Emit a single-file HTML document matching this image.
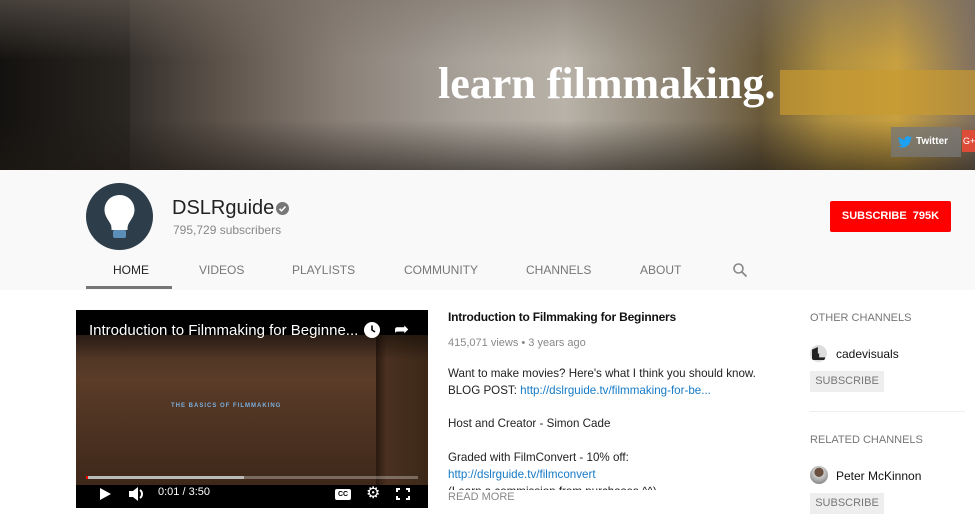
<!DOCTYPE html>
<html><head><meta charset="utf-8"><style>
*{margin:0;padding:0;box-sizing:border-box}
body{width:975px;height:523px;overflow:hidden;background:#fff;font-family:"Liberation Sans",Arial,sans-serif;position:relative}
.ab{position:absolute}
#banner{left:0;top:0;width:975px;height:170px;background:linear-gradient(90deg,#1c1a18 0%,#2e2a26 12%,#5a5048 22%,#8a8078 35%,#a8a29a 48%,#b8b2a8 58%,#8a8070 70%,#6a5a3a 78%,#b09040 85%,#c8a040 92%,#807060 100%)}
#banner .top{left:0;top:0;width:975px;height:60px;background:linear-gradient(180deg,rgba(120,110,100,.5),rgba(0,0,0,0))}
#banner .bot{left:0;top:120px;width:975px;height:50px;background:linear-gradient(180deg,rgba(0,0,0,0),rgba(30,25,20,.6))}
.lf{left:438px;top:58px;font-family:"Liberation Serif",serif;font-weight:bold;font-size:44px;color:#fff}
#head{left:0;top:170px;width:975px;height:120px;background:#f9f9f9}
.nav{top:263px;font-size:12px;color:#777}
</style></head><body>
<div id="banner" class="ab">
<div class="ab" style="left:0;top:0;width:130px;height:170px;background:linear-gradient(90deg,#141210,#2a2622)"></div>
<div class="ab" style="left:780px;top:70px;width:195px;height:45px;background:#c89a30;opacity:.7"></div>
<div class="ab top"></div><div class="ab bot"></div>
<div class="ab lf">learn filmmaking.</div>
<div class="ab" style="left:891px;top:127px;width:70px;height:30px;background:rgba(120,120,120,.75)"></div>
<svg class="ab" style="left:898px;top:136px" width="14" height="12" viewBox="0 0 24 20"><path d="M24 2.4a10 10 0 0 1-2.8.8A5 5 0 0 0 23.3.4a10 10 0 0 1-3.1 1.2A4.9 4.9 0 0 0 11.8 6 14 14 0 0 1 1.7.9a4.9 4.9 0 0 0 1.5 6.6 5 5 0 0 1-2.2-.6 4.9 4.9 0 0 0 3.9 4.9 5 5 0 0 1-2.2.1 4.9 4.9 0 0 0 4.6 3.4A9.9 9.9 0 0 1 0 17.3 14 14 0 0 0 7.5 19.5c9 0 14-7.5 14-14v-.6A10 10 0 0 0 24 2.4z" fill="#1da1f2"/></svg>
<div class="ab" style="left:916px;top:136px;color:#fff;font-size:10px;font-weight:bold">Twitter</div>
<div class="ab" style="left:962px;top:130px;width:13px;height:22px;background:#dd4b39;color:#fff;font-size:9px;padding:6px 1px">G+</div>
</div>
<div id="head" class="ab"></div>
<svg class="ab" style="left:86px;top:183px" width="67" height="67" viewBox="0 0 67 67"><circle cx="33.5" cy="33.5" r="33.5" fill="#2d3e4a"/><path d="M33.5 12c-9 0-15 7-15 15 0 6 4 10 6 14 1 2 1 4 1 6h16c0-2 0-4 1-6 2-4 6-8 6-14 0-8-6-15-15-15z" fill="#fff"/><rect x="27" y="47" width="13" height="8" rx="2" fill="#5b8fb9"/></svg>
<div class="ab" style="left:172px;top:197px;font-size:20px;color:#222">DSLRguide</div>
<svg class="ab" style="left:276px;top:202px" width="13" height="13" viewBox="0 0 13 13"><circle cx="6.5" cy="6.5" r="6.5" fill="#777"/><path d="M3.5 6.8l2 2 4-4.2" stroke="#fff" stroke-width="1.6" fill="none"/></svg>
<div class="ab" style="left:173px;top:223px;font-size:12px;color:#888">795,729 subscribers</div>
<div class="ab" style="left:830px;top:201px;width:121px;height:31px;background:#f00;color:#fff;font-size:11px;font-weight:bold;text-align:center;line-height:31px;border-radius:2px">SUBSCRIBE&nbsp; 795K</div>
<div class="ab nav" style="left:113px;color:#222">HOME</div>
<div class="ab nav" style="left:199px">VIDEOS</div>
<div class="ab nav" style="left:292px">PLAYLISTS</div>
<div class="ab nav" style="left:404px">COMMUNITY</div>
<div class="ab nav" style="left:526px">CHANNELS</div>
<div class="ab nav" style="left:640px">ABOUT</div>
<svg class="ab" style="left:732px;top:262px" width="16" height="16" viewBox="0 0 16 16"><circle cx="6.5" cy="6.5" r="4.5" stroke="#888" stroke-width="1.6" fill="none"/><path d="M10 10l4.5 4.5" stroke="#888" stroke-width="1.8"/></svg>
<div class="ab" style="left:86px;top:286px;width:86px;height:3px;background:#777"></div>
<div class="ab" style="left:76px;top:310px;width:352px;height:198px;background:#000;overflow:hidden">
<div class="ab" style="left:0;top:25px;width:352px;height:150px;background:linear-gradient(180deg,#4a3224,#5a3c28 30%,#4e3322 60%,#3e281a);"></div>
<div class="ab" style="left:300px;top:25px;width:52px;height:150px;background:linear-gradient(90deg,#2a1a10,#4a3020 20%,#3c2818)"></div>
<div class="ab" style="left:0;top:0;width:352px;height:50px;background:linear-gradient(180deg,rgba(0,0,0,.9),rgba(0,0,0,0))"></div>
<div class="ab" style="left:13px;top:12px;color:#fff;font-size:15px">Introduction to Filmmaking for Beginne...</div>
<svg class="ab" style="left:288px;top:12px" width="16" height="16"><circle cx="8" cy="8" r="8" fill="#fff"/><path d="M8 3.5V8l3 2" stroke="#000" stroke-width="1.6" fill="none"/></svg>
<div class="ab" style="left:318px;top:9px;color:#fff;font-size:18px">&#10150;</div>
<div class="ab" style="left:95px;top:93px;color:#7aaedc;font-size:6px;letter-spacing:1px;font-weight:bold">THE BASICS OF FILMMAKING</div>
<div class="ab" style="left:10px;top:166px;width:332px;height:3px;background:rgba(255,255,255,.3)"></div>
<div class="ab" style="left:10px;top:166px;width:158px;height:3px;background:#bbb"></div>
<div class="ab" style="left:10px;top:166px;width:2px;height:3px;background:#f00"></div>
<div class="ab" style="left:0;top:175px;width:352px;height:23px;background:#000"></div>
<svg class="ab" style="left:22px;top:177px" width="14" height="14"><path d="M2 1l11 6-11 6z" fill="#fff"/></svg>
<svg class="ab" style="left:52px;top:177px" width="18" height="14"><path d="M1 4h4l5-4v14l-5-4H1z" fill="#fff"/><path d="M12 3a5 5 0 0 1 0 8" stroke="#fff" stroke-width="2" fill="none"/></svg>
<div class="ab" style="left:82px;top:176px;color:#fff;font-size:11px">0:01 / 3:50</div>
<div class="ab" style="left:259px;top:179px;width:16px;height:11px;background:#fff;border-radius:2px;font-size:7px;font-weight:bold;line-height:11px;text-align:center">CC</div>
<div class="ab" style="left:290px;top:173px;color:#fff;font-size:16px">&#9881;</div>
<div class="ab" style="left:320px;top:178px;width:14px;height:12px;border:2px solid #fff"></div>
<div class="ab" style="left:324px;top:176px;width:6px;height:16px;background:#000"></div>
<div class="ab" style="left:318px;top:182px;width:18px;height:4px;background:#000"></div>
</div>
<div class="ab" style="left:448px;top:310px;font-size:12px;color:#111;font-weight:bold;letter-spacing:-0.2px">Introduction to Filmmaking for Beginners</div>
<div class="ab" style="left:448px;top:337px;font-size:11px;color:#888">415,071 views • 3 years ago</div>
<div class="ab" style="left:448px;top:366px;font-size:11.6px;color:#222;line-height:16.8px;width:320px;height:124px;overflow:hidden">Want to make movies? Here's what I think you should know.<br>BLOG POST: <span style="color:#167ac6">http://dslrguide.tv/filmmaking-for-be...</span><br><br>Host and Creator - Simon Cade<br><br>Graded with FilmConvert - 10% off:<br><span style="color:#167ac6">http://dslrguide.tv/filmconvert</span><br>(Learn a commission from purchases ^^)</div>
<div class="ab" style="left:448px;top:491px;font-size:11px;color:#888">READ MORE</div>
<div class="ab" style="left:810px;top:312px;font-size:11px;color:#777">OTHER CHANNELS</div>
<div class="ab" style="left:810px;top:345px;width:17px;height:17px;border-radius:50%;background:#ddd;overflow:hidden"><div class="ab" style="left:2px;top:2px;width:13px;height:13px;background:#222;clip-path:polygon(0 20%,45% 0,45% 50%,55% 50%,55% 80%,100% 80%,100% 100%,0 100%)"></div></div>
<div class="ab" style="left:836px;top:347px;font-size:12px;color:#111">cadevisuals</div>
<div class="ab" style="left:810px;top:371px;width:74px;height:21px;background:#eee;color:#777;font-size:11px;line-height:21px;text-align:center">SUBSCRIBE</div>
<div class="ab" style="left:810px;top:411px;width:155px;height:1px;background:#eee"></div>
<div class="ab" style="left:810px;top:434px;font-size:11px;color:#777">RELATED CHANNELS</div>
<div class="ab" style="left:810px;top:466px;width:18px;height:18px;border-radius:50%;background:radial-gradient(circle at 50% 35%,#6a5040 30%,#ccc 32%,#888 80%)"></div>
<div class="ab" style="left:836px;top:469px;font-size:12px;color:#111">Peter McKinnon</div>
<div class="ab" style="left:810px;top:493px;width:74px;height:21px;background:#eee;color:#777;font-size:11px;line-height:21px;text-align:center">SUBSCRIBE</div>
</body></html>
